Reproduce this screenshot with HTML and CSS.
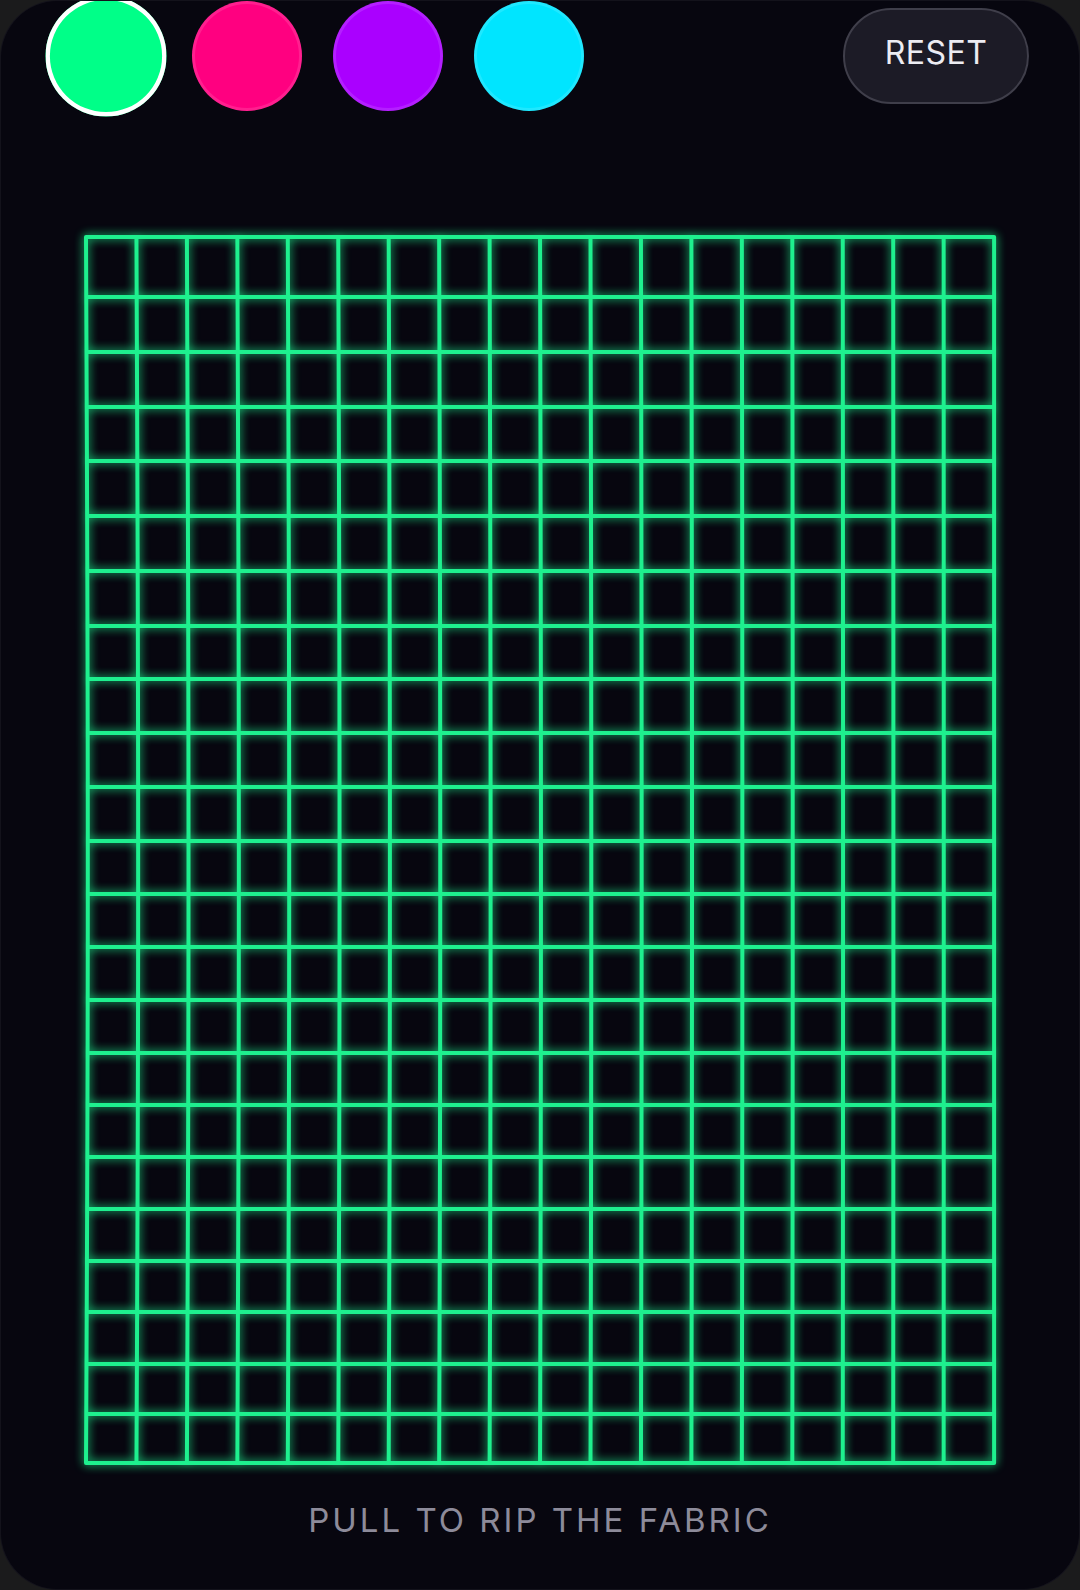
FILE: index.html
```html
<!DOCTYPE html>
<html>
<head>
    <meta charset="UTF-8">
    <title>Neon Cloth</title>
    <link rel="stylesheet" href="styles.css">
</head>
<body>
    <div class="app">
        <div class="toolbar">
            <div class="swatches">
                <button class="swatch active" style="--c: #00ff88" data-color="#1ef08e"></button>
                <button class="swatch" style="--c: #ff0080" data-color="#ff0080"></button>
                <button class="swatch" style="--c: #aa00ff" data-color="#aa00ff"></button>
                <button class="swatch" style="--c: #00e5ff" data-color="#00e5ff"></button>
            </div>
            <button class="reset-btn" id="resetBtn">RESET</button>
        </div>

        <div class="stage" id="stage">
            <canvas id="cloth"></canvas>
        </div>

        <div class="hint">PULL TO RIP THE FABRIC</div>
    </div>

    <script src="script.js"></script>
</body>
</html>
```

FILE: styles.css
```css
body {
    margin: 0;
    background: #1b1b1c;
    font-family: Inter, 'Liberation Sans', Arial, sans-serif;
}

.app {
    height: 1590px;
    box-sizing: border-box;
    background: #07060f;
    border-radius: 58px;
    border: 1px solid rgba(255, 255, 255, 0.05);
    display: flex;
    flex-direction: column;
    overflow: hidden;
}

.toolbar {
    height: 110px;
    padding: 0 50px;
    display: flex;
    align-items: center;
    justify-content: space-between;
    flex-shrink: 0;
}

.swatches {
    display: flex;
    gap: 31px;
}

.swatch {
    width: 110px;
    height: 110px;
    border: none;
    border-radius: 50%;
    padding: 0;
    background: var(--c);
    box-shadow: inset 0 0 0 3px rgba(255, 255, 255, 0.12);
    cursor: pointer;
    transition: transform 0.2s;
}

.swatch.active {
    transform: scale(1.1);
    box-shadow: inset 0 0 0 4px #fff;
}

.reset-btn {
    width: 186px;
    height: 96px;
    box-sizing: border-box;
    padding: 0 0 8px;
    border: 2px solid #3f3e4a;
    border-radius: 48px;
    background: #1c1b26;
    color: #ececf2;
    font-family: inherit;
    font-size: 32px;
    letter-spacing: 0.5px;
    cursor: pointer;
}

.stage {
    flex: 1;
    position: relative;
}

#cloth {
    display: block;
    width: 100%;
    height: 100%;
}

.hint {
    padding-bottom: 48px;
    text-align: center;
    font-size: 33px;
    line-height: 41px;
    letter-spacing: 3px;
    color: #8d8b9a;
}
```

FILE: script.js
```js
const stage = document.getElementById('stage');
const canvas = document.getElementById('cloth');
const ctx = canvas.getContext('2d');

const COLS = 19;
const ROWS = 24;
const SPACING_X = 50.45;
const LEFT = 85;

const ROW_Y = [237, 297, 352, 407, 461, 516, 571, 626, 679, 733, 787, 841,
    894, 947, 1000, 1053, 1105, 1157, 1209, 1261, 1312, 1364, 1414, 1463];

let color = '#1ef08e';
let points = [];

function buildCloth() {
    const top = stage.getBoundingClientRect().top;
    points = [];
    for (let r = 0; r < ROWS; r++) {
        const row = [];
        for (let c = 0; c < COLS; c++) {
            // a little inward sag on the loose side
            const sag = 1.8 * Math.sin(Math.PI * r / (ROWS - 1)) * (1 - c / (COLS - 1));
            row.push({ x: LEFT + c * SPACING_X + sag, y: ROW_Y[r] - top });
        }
        points.push(row);
    }
}

function draw() {
    const rect = stage.getBoundingClientRect();
    canvas.width = rect.width;
    canvas.height = rect.height;

    ctx.clearRect(0, 0, canvas.width, canvas.height);
    ctx.strokeStyle = color;
    ctx.lineWidth = 4;
    ctx.lineCap = 'round';
    ctx.shadowColor = color;
    ctx.shadowBlur = 10;

    ctx.beginPath();
    for (let r = 0; r < ROWS; r++) {
        for (let c = 0; c < COLS; c++) {
            const p = points[r][c];
            if (c < COLS - 1) {
                const q = points[r][c + 1];
                ctx.moveTo(p.x, p.y);
                ctx.lineTo(q.x, q.y);
            }
            if (r < ROWS - 1) {
                const q = points[r + 1][c];
                ctx.moveTo(p.x, p.y);
                ctx.lineTo(q.x, q.y);
            }
        }
    }
    ctx.stroke();
}

document.querySelectorAll('.swatch').forEach(btn => {
    btn.addEventListener('click', () => {
        document.querySelector('.swatch.active').classList.remove('active');
        btn.classList.add('active');
        color = btn.dataset.color;
        draw();
    });
});

document.getElementById('resetBtn').addEventListener('click', () => {
    buildCloth();
    draw();
});

buildCloth();
draw();
```
